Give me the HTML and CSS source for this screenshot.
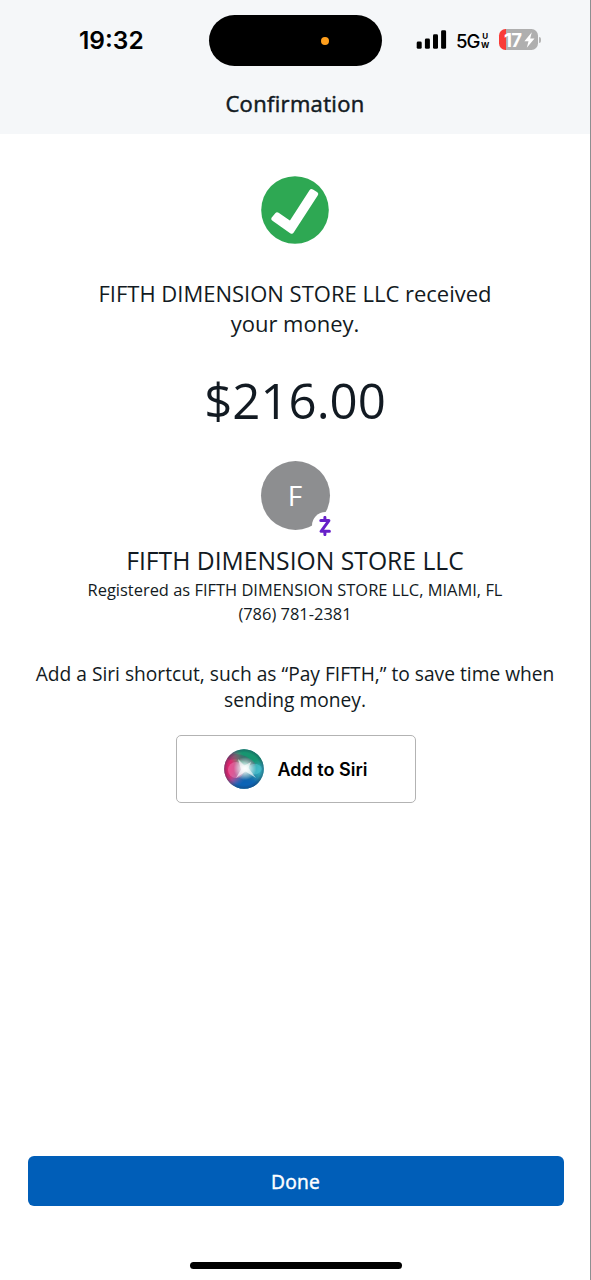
FILE: index.html
```html
<!DOCTYPE html>
<html lang="en">
<head>
<meta charset="utf-8">
<title>Confirmation</title>
<link rel="stylesheet" href="styles.css">
</head>
<body>
<div class="screen">
  <header class="header">
    <div class="status">
      <div class="time">19:32</div>
      <div class="island"><span class="mic-dot"></span></div>
      <div class="indicators">
        <svg class="signal" width="31" height="20" viewBox="0 0 31 20">
          <rect x="0.7" y="11.5" width="5" height="7.3" rx="1.4"/>
          <rect x="8.9" y="8.5" width="5" height="10.3" rx="1.4"/>
          <rect x="17" y="4.3" width="5" height="14.5" rx="1.4"/>
          <rect x="25.1" y="0.3" width="5" height="18.5" rx="1.4"/>
        </svg>
        <div class="network"><span class="net-main">5G</span><span class="net-sub"><span>U</span><span>W</span></span></div>
        <div class="battery">
          <div class="battery-body"><span class="level">17</span>
            <svg class="bolt" width="11" height="16" viewBox="0 0 11 16"><path d="M7.8 0.2 0.4 9.2h4.1L2.8 15.8l7.7-9.2H6.2z" fill="#fff"/></svg>
          </div>
          <span class="battery-cap"></span>
        </div>
      </div>
    </div>
    <h1 class="title">Confirmation</h1>
  </header>
  <main class="content">
    <svg class="check" width="68" height="68" viewBox="0 0 68 68">
      <circle cx="34" cy="34" r="33.8" fill="#2ea853"/>
      <path d="M12.9 42.8 16.2 38.8 29.6 48 50.6 15.6 54.6 18.2 30.6 55.2Z" fill="#fff" stroke="#fff" stroke-width="5" stroke-linejoin="round"/>
    </svg>
    <p class="message">FIFTH DIMENSION STORE LLC received<br>your money.</p>
    <p class="amount">$216.00</p>
    <div class="avatar">F
      <span class="badge"><svg width="12" height="20" viewBox="0 0 12 20"><path d="M1.8 4.6H9.9L2.1 15.3H10.4M5.9 1.4V4.6M5.9 15.3V18.6" fill="none" stroke="#6720c9" stroke-width="3" stroke-linecap="round" stroke-linejoin="round"/></svg></span>
    </div>
    <h2 class="name">FIFTH DIMENSION STORE LLC</h2>
    <p class="details">Registered as FIFTH DIMENSION STORE LLC, MIAMI, FL<br>(786) 781-2381</p>
    <p class="hint">Add a Siri shortcut, such as “Pay FIFTH,” to save time when<br>sending money.</p>
    <button class="siri">
      <svg class="orb" width="40" height="40" viewBox="0 0 40 40">
        <defs>
          <radialGradient id="glow"><stop offset="0" stop-color="#fff"/><stop offset=".25" stop-color="#fff" stop-opacity=".85"/><stop offset="1" stop-color="#fff" stop-opacity="0"/></radialGradient>
          <radialGradient id="rim"><stop offset=".82" stop-color="#143451" stop-opacity="0"/><stop offset="1" stop-color="#263551" stop-opacity=".4"/></radialGradient>
          <filter id="soft" x="-50%" y="-50%" width="200%" height="200%"><feGaussianBlur stdDeviation="3.2"/></filter>
          <filter id="fine" x="-50%" y="-50%" width="200%" height="200%"><feGaussianBlur stdDeviation=".6"/></filter>
          <clipPath id="disc"><circle cx="20" cy="20" r="19.8"/></clipPath>
        </defs>
        <g clip-path="url(#disc)">
          <rect width="40" height="40" fill="#24798d"/>
          <g filter="url(#soft)">
            <ellipse cx="28" cy="5" rx="17" ry="12" fill="#159570"/>
            <ellipse cx="4" cy="20" rx="10" ry="17" fill="#dc286e"/>
            <ellipse cx="21" cy="37" rx="17" ry="10" fill="#1163b5"/>
            <ellipse cx="36" cy="22" rx="7" ry="7" fill="#33afc1"/>
          </g>
          <g filter="url(#fine)">
            <path d="M4 9Q18 4 30 17" fill="none" stroke="#663f66" stroke-width="5" opacity=".4"/>
            <circle cx="12" cy="21" r="8" fill="#ee82b8" opacity=".5"/>
            <path d="M21 21Q28 12 35 16T33 25Q26 27 21 21Z" fill="#58cbd7" opacity=".5"/>
            <circle cx="21" cy="19.5" r="11.5" fill="url(#glow)"/>
            <path d="M14 10 20.5 16.5 27 13 24.5 19 32 29 21.5 22.5 12 29 17 20.5Z" fill="#fff" opacity=".6"/>
          </g>
          <circle cx="20" cy="20" r="19.8" fill="url(#rim)"/>
        </g>
      </svg>
      <span class="siri-label">Add to Siri</span>
    </button>
  </main>
  <footer class="footer">
    <button class="done">Done</button>
    <div class="home"></div>
  </footer>
</div>
</body>
</html>
```
FILE: styles.css
```css
* { box-sizing: border-box; }
body { margin: 0; background: #fff; }
h1, h2, p { margin: 0; font-weight: 400; }
button { font: inherit; padding: 0; }
svg { display: block; flex: none; }
.screen {
  width: 591px; height: 1280px;
  display: flex; flex-direction: column;
  border-right: 1px solid #8d8f91;
  font-family: "Open Sans", sans-serif; color: #121a22; white-space: nowrap;
}
.header { height: 134px; background: #f5f7f9; }
.status { height: 81px; display: grid; grid-template-columns: 209px 173px 1fr; align-items: center; }
.time {
  padding: 0 0 1px 79px; font: 600 24.5px/30px Inter, sans-serif; color: #000;
}
.island {
  width: 173px; height: 51px; border-radius: 26px; background: #000;
  display: flex; align-items: center; padding-left: 112px;
}
.mic-dot { width: 8px; height: 8px; border-radius: 50%; background: #ff9f1c; }
.indicators { display: flex; align-items: center; padding-left: 34px; color: #000; }
.signal { margin-top: -1px; }
.network { display: flex; align-items: center; margin-left: 9px; width: 34px; font-family: Inter, sans-serif; }
.net-main { width: 25px; font-size: 18.6px; font-weight: 500; letter-spacing: -.9px; }
.net-sub { display: flex; flex-direction: column; align-items: center; font-size: 8px; font-weight: 700; line-height: 9px; }
.battery { display: flex; align-items: center; gap: 1px; margin-left: 9px; margin-top: -2px; }
.battery-body {
  width: 39px; height: 21px; border-radius: 6.5px; display: flex; align-items: center;
  padding-left: 5px; background: linear-gradient(90deg, #f93c38 7px, #afafaf 7px);
}
.level { width: 20px; font: 700 18.5px/21px Inter, sans-serif; letter-spacing: -.7px; padding-top: 1px; color: #fff; }
.battery-cap { width: 2px; height: 6px; border-radius: 0 3px 3px 0; background: #b5b5b5; }
.title {
  text-align: center; font-size: 22px; line-height: 30px; padding-top: 7px;
  letter-spacing: .33px; -webkit-text-stroke: .5px currentColor;
}
.content { flex: 1; display: flex; flex-direction: column; align-items: center; padding-top: 42px; text-align: center; }
.message { margin-top: 34px; font-size: 22px; line-height: 30px; }
.amount { margin-top: 32px; font-size: 49.2px; line-height: 60px; }
.avatar {
  position: relative; width: 69px; height: 69px; margin-top: 31px; border-radius: 50%;
  background: #8d8e90; color: #fff; font-size: 28px; line-height: 68px;
}
.badge {
  position: absolute; left: 51px; top: 51px; width: 27px; height: 27px; border-radius: 50%;
  background: #fff; display: flex; align-items: center; justify-content: center;
}
.name { margin-top: 15px; font-size: 24.7px; line-height: 32px; }
.details { margin-top: 1px; font-size: 16.45px; line-height: 24px; }
.hint { margin-top: 35px; font-size: 19.2px; line-height: 26px; }
.siri {
  width: 240px; height: 68px; margin: 22px 0 0 1px; border: 1.5px solid #b3b3b3; border-radius: 5px;
  background: #fff; color: #000; display: flex; align-items: center; gap: 14px; padding-left: 47px;
  font: 600 18px/24px Inter, sans-serif;
}
.siri-label { padding-top: 1px; }
.footer { height: 124px; display: flex; flex-direction: column; align-items: center; padding-left: 1px; }
.done {
  width: 536px; height: 50px; border: 0; border-radius: 6px; background: #005eb8; color: #fff;
  font-size: 19.2px; letter-spacing: .2px; -webkit-text-stroke: .45px currentColor;
}
.home { width: 212px; height: 7px; margin-top: 56px; border-radius: 4px; background: #000; }
```
